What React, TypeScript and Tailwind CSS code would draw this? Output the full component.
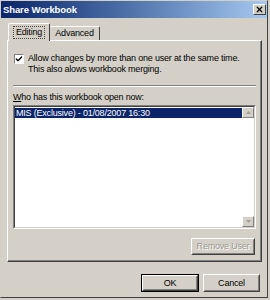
import { Check, X } from "lucide-react";

function Btn({ label, disabled, className }: { label: string; disabled?: boolean; className: string }) {
  return (
    <div className={`border border-t-white border-l-white border-r-[#404040] border-b-[#404040] ${className}`}>
      <div className="h-full w-full border border-t-[#d4d0c8] border-l-[#d4d0c8] border-r-[#808080] border-b-[#808080] flex items-center justify-center">
        <span className={disabled ? "text-[#9a978f] [text-shadow:1px_1px_0_#ffffff]" : "text-black"}>{label}</span>
      </div>
    </div>
  );
}

function ScrollArrow({ up }: { up?: boolean }) {
  return (
    <div className="h-[11px] w-[12px] bg-[#d4d0c8] border border-t-white border-l-white border-r-[#808080] border-b-[#808080] flex items-center justify-center">
      <svg width="5" height="3" viewBox="0 0 5 3">
        <path d={up ? "M2.5 0 L5 3 L0 3 Z" : "M0 0 L5 0 L2.5 3 Z"} fill="#a09d96" />
      </svg>
    </div>
  );
}

export default function App() {
  return (
    <div className="w-[270px] h-[300px] bg-[#d4d0c8] font-['Liberation_Sans',Arial,sans-serif] text-[9px] tracking-[-0.2px] leading-none text-black overflow-hidden">
      <div className="h-[298px] w-[268px] border border-t-[#d4d0c8] border-l-[#d4d0c8] border-r-[#404040] border-b-[#404040] flex flex-col">
        {/* title bar */}
        <div className="h-[17px] bg-gradient-to-r from-[#0a246a] to-[#a6caf0] flex items-center justify-between pl-[2px] pr-[1px]">
          <span className="text-white font-bold text-[9.5px] tracking-[-0.1px]">Share Workbook</span>
          <div className="w-[13px] h-[11px] bg-[#d4d0c8] border border-t-white border-l-white border-r-[#404040] border-b-[#404040] flex items-center justify-center">
            <X size={9} strokeWidth={3.5} color="#000" />
          </div>
        </div>

        {/* body */}
        <div className="flex-1 flex flex-col pl-[6px] pr-[5px]">
          {/* tabs */}
          <div className="flex items-end mt-[5px] ml-[1px] relative z-10">
            <div className="h-[18px] w-[42px] -mb-px bg-[#d4d0c8] border-t border-l border-t-white border-l-white border-r border-r-[#404040] rounded-t-[2px] flex items-center justify-center">
              <span className="border border-dotted border-[#444] px-[2px] py-[1px]">Editing</span>
            </div>
            <div className="h-[14px] w-[50px] bg-[#d4d0c8] border-t border-t-white border-r border-r-[#404040] rounded-t-[2px] flex items-center justify-center">
              <span>Advanced</span>
            </div>
          </div>

          {/* panel */}
          <div className="h-[222px] border border-t-white border-l-white border-r-[#404040] border-b-[#404040]">
            <div className="h-full border-r border-b border-r-[#808080] border-b-[#808080] flex flex-col pl-[5px] pr-[4px]">
              <div className="flex mt-[12px] pl-px">
                <div className="w-[10px] h-[10px] mt-[1px] shrink-0 bg-white border border-t-[#808080] border-l-[#808080] border-r-white border-b-white flex items-center justify-center">
                  <Check size={8} strokeWidth={4} color="#000" />
                </div>
                <div className="ml-[4px] leading-[11px]">
                  <div>Allow changes by more than one user at the same time.</div>
                  <div>This also alows workbook merging.</div>
                </div>
              </div>

              <div className="mt-[10px] h-[2px] border-t border-t-[#808080] border-b border-b-white" />

              <div className="mt-[6px]">
                <span className="underline">W</span>ho has this workbook open now:
              </div>

              <div className="mt-[3px] h-[124px] w-[243px] bg-white border border-t-[#808080] border-l-[#808080] border-r-white border-b-white">
                <div className="h-full border border-t-[#404040] border-l-[#404040] border-r-[#d4d0c8] border-b-[#d4d0c8] flex">
                  <div className="flex-1 pt-px">
                    <div className="h-[10px] bg-[#0a246a] text-white flex items-center pl-px">
                      MIS (Exclusive) - 01/08/2007 16:30
                    </div>
                  </div>
                  <div className="w-[12px] flex flex-col justify-between bg-white">
                    <ScrollArrow up />
                    <ScrollArrow />
                  </div>
                </div>
              </div>

              <div className="flex justify-end mt-[9px] pr-px">
                <Btn label="Remove User" disabled className="w-[64px] h-[17px]" />
              </div>
            </div>
          </div>

          {/* buttons */}
          <div className="flex justify-end gap-[4px] mt-[12px] pr-[2px]">
            <div className="border border-black">
              <Btn label="OK" className="w-[56px] h-[16px]" />
            </div>
            <Btn label="Cancel" className="w-[57px] h-[18px]" />
          </div>
        </div>
      </div>
    </div>
  );
}
